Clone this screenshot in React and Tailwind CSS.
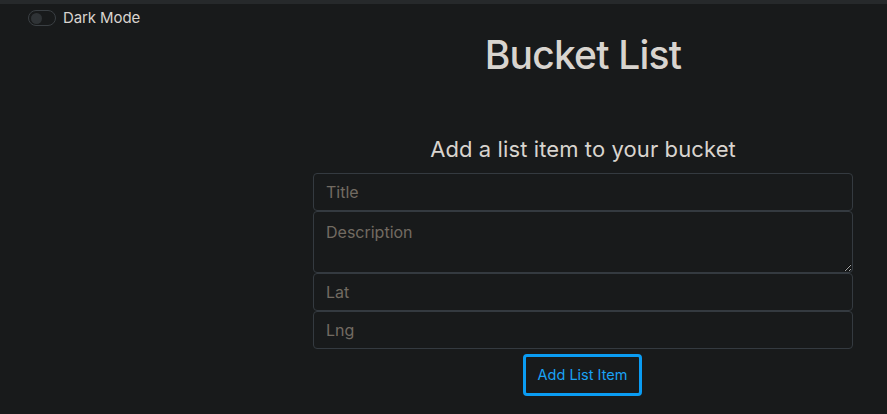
export default function App() {
  return (
    <div className="min-h-[414px] w-full bg-[#181a1b] font-['Inter',sans-serif] text-[#d8d4cf]">
      <div className="h-[4px] bg-[#26292b]" />
      <div className="flex">
        <div className="w-[313px] shrink-0 pl-[28px] pt-[4px]">
          <label className="flex items-center gap-[8px]">
            <span className="flex h-[16px] w-[28px] items-center rounded-full border border-[#3a3f43] bg-[#181a1b] px-[2px]">
              <span className="h-[11px] w-[11px] rounded-full bg-[#2f3336]" />
            </span>
            <span className="-ml-[1px] text-[15px] leading-[20px] tracking-[-0.1px] text-[#d8d4cf]">Dark Mode</span>
          </label>
        </div>
        <div className="flex w-[540px] shrink-0 flex-col items-center">
          <h1 className="mt-[27px] text-[39px] font-medium leading-[48px] tracking-[-0.8px]">Bucket List</h1>
          <h4 className="mt-[56px] text-[22px] leading-[28px] tracking-[0.1px]">Add a list item to your bucket</h4>
          <div className="mt-[10px] flex w-full flex-col">
            <input
              placeholder="Title"
              className="h-[38px] w-full rounded-[4px] border border-[#343a40] bg-[#181a1b] px-[12px] text-[16px] text-[#d8d4cf] outline-none placeholder:text-[#726b62]"
            />
            <textarea
              placeholder="Description"
              className="h-[62px] w-full rounded-[4px] border border-[#343a40] bg-[#181a1b] px-[12px] py-[8px] text-[16px] leading-[24px] text-[#d8d4cf] outline-none placeholder:text-[#726b62]"
            />
            <input
              placeholder="Lat"
              className="h-[38px] w-full rounded-[4px] border border-[#343a40] bg-[#181a1b] px-[12px] text-[16px] text-[#d8d4cf] outline-none placeholder:text-[#726b62]"
            />
            <input
              placeholder="Lng"
              className="h-[38px] w-full rounded-[4px] border border-[#343a40] bg-[#181a1b] px-[12px] text-[16px] text-[#d8d4cf] outline-none placeholder:text-[#726b62]"
            />
          </div>
          <button className="mt-[5px] ml-[210px] h-[42px] w-[119px] self-start rounded-[4px] border-[3px] border-[#0a9cf3] bg-transparent text-[14.5px] text-[#1aa2f5]">
            Add List Item
          </button>
        </div>
      </div>
    </div>
  );
}
